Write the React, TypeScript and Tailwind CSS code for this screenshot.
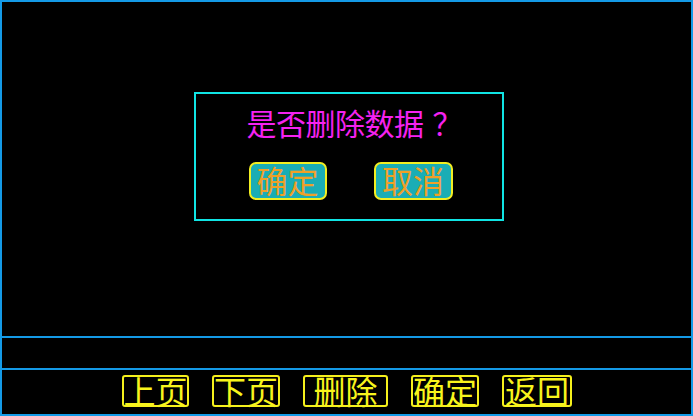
export default function App() {
  const tabs = [
    { label: '上页', w: 'w-[67px]' },
    { label: '下页', w: 'w-[68px]' },
    { label: '删除', w: 'w-[85px]' },
    { label: '确定', w: 'w-[68px]' },
    { label: '返回', w: 'w-[70px]' }
  ]

  return (
    <div
      className="w-[693px] h-[416px] bg-black border-2 border-[#149ae6] flex flex-col"
      style={{ fontFamily: '"Noto Sans CJK SC", "Noto Sans", sans-serif' }}
    >
      {/* main area with dialog */}
      <div className="flex-1 pt-[90px] pl-[192px]">
        <div className="w-[310px] h-[129px] border-2 border-[#10e4e4] flex flex-col items-center">
          <div className="mt-[10px] pl-[2px] text-[30px] leading-[36px] tracking-[-0.5px] text-[#f522f0] whitespace-nowrap">
            是否删除数据<span className="inline-block pl-[9px] w-[30px]">？</span>
          </div>
          <div className="mt-[22px] flex gap-[47px] pl-[3px]">
            <button className="w-[78px] h-[38px] pb-[4px] rounded-[7px] border-2 border-[#f2ee22] bg-[#1aadb5] text-[#f0a028] text-[31px] leading-none whitespace-nowrap">
              确定
            </button>
            <button className="w-[79px] h-[38px] pb-[4px] rounded-[7px] border-2 border-[#f2ee22] bg-[#1aadb5] text-[#f0a028] text-[31px] leading-none whitespace-nowrap">
              取消
            </button>
          </div>
        </div>
      </div>

      {/* status row */}
      <div className="h-[2px] bg-[#149ae6]" />
      <div className="h-[30px]" />
      <div className="h-[2px] bg-[#149ae6]" />

      {/* bottom buttons */}
      <div className="h-[44px] flex items-start pt-[5px] pl-[120px] gap-[23px]">
        {tabs.map(t => (
          <div
            key={t.label}
            className={`${t.w} h-[32px] pb-[3px] border-2 border-[#f5f01c] rounded-[3px] flex items-center justify-center text-[#f8f41c] text-[32px] leading-none whitespace-nowrap`}
          >
            {t.label}
          </div>
        ))}
      </div>
    </div>
  )
}
